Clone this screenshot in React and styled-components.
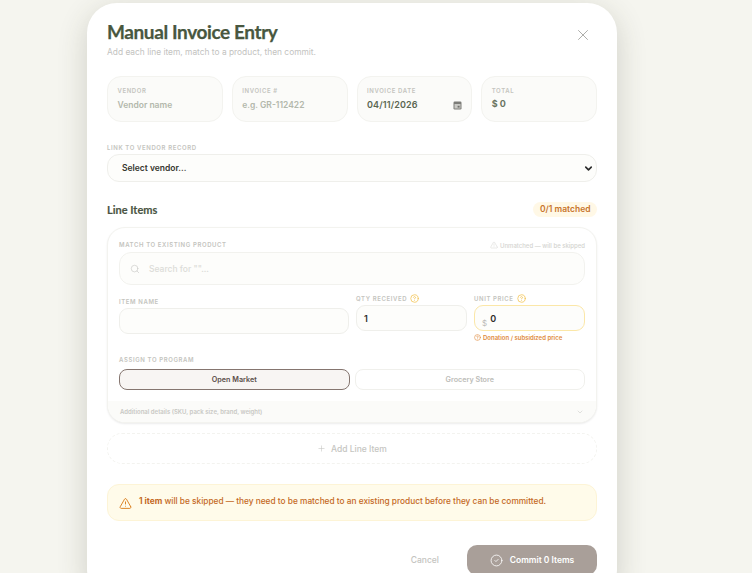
import React from "react";
import styled, { createGlobalStyle } from "styled-components";
import { X, Search, TriangleAlert, CircleHelp, Plus, ChevronDown, CircleCheck } from "lucide-react";

const GlobalStyle = createGlobalStyle`
  html, body {
    margin: 0;
    height: 100%;
    overflow: hidden;
    background: #f5f5ef;
    font-family: "Inter", "Liberation Sans", sans-serif;
  }
`;

const CalendarGlyph = () => (
  <svg width="9" height="9" viewBox="0 0 9 9">
    <rect x="0.5" y="0.5" width="8" height="8" rx="1.2" fill="#7c7c78" />
    <rect x="1.5" y="3" width="6" height="4.5" fill="#c9c9c5" />
    <rect x="4.6" y="4.8" width="2" height="1.8" fill="#6f6f6b" />
  </svg>
);

const App = () => {
  return (
    <>
      <GlobalStyle />
      <Page>
        <Modal>
          <Header>
            <div>
              <Title>Manual Invoice Entry</Title>
              <Subtitle>Add each line item, match to a product, then commit.</Subtitle>
            </div>
            <CloseButton>
              <X size={18} strokeWidth={1.1} />
            </CloseButton>
          </Header>

          <TopFields>
            <TopField>
              <TinyLabel>Vendor</TinyLabel>
              <FieldValue $muted>Vendor name</FieldValue>
            </TopField>
            <TopField>
              <TinyLabel>Invoice #</TinyLabel>
              <FieldValue $muted>e.g. GR-112422</FieldValue>
            </TopField>
            <TopField>
              <TinyLabel>Invoice Date</TinyLabel>
              <DateRow>
                <FieldValue>04/11/2026</FieldValue>
                <CalendarGlyph />
              </DateRow>
            </TopField>
            <TopField>
              <TinyLabel>Total</TinyLabel>
              <TotalValue>$ 0</TotalValue>
            </TopField>
          </TopFields>

          <VendorLabel>Link to vendor record</VendorLabel>
          <VendorSelect>
            <span>Select vendor...</span>
            <ChevronDown size={11} strokeWidth={3.5} color="#2b2b2b" />
          </VendorSelect>

          <SectionHeader>
            <SectionTitle>Line Items</SectionTitle>
            <MatchBadge>0/1 matched</MatchBadge>
          </SectionHeader>

          <LineCard>
            <CardBody>
              <MatchRow>
                <TinyLabel>Match to existing product</TinyLabel>
                <Unmatched>
                  <TriangleAlert size={8} strokeWidth={1.5} />
                  Unmatched — will be skipped
                </Unmatched>
              </MatchRow>
              <SearchBox>
                <Search size={10} strokeWidth={1.5} color="#c9c9c5" />
                <span>Search for ""...</span>
              </SearchBox>

              <ItemGrid>
                <ItemNameCol>
                  <TinyLabel>Item Name</TinyLabel>
                  <ItemInput />
                </ItemNameCol>
                <div>
                  <HelpLabel>
                    <TinyLabel>Qty Received</TinyLabel>
                    <CircleHelp size={9} color="#f2c14e" strokeWidth={2} />
                  </HelpLabel>
                  <ItemInput>1</ItemInput>
                </div>
                <div>
                  <HelpLabel>
                    <TinyLabel>Unit Price</TinyLabel>
                    <CircleHelp size={9} color="#f2c14e" strokeWidth={2} />
                  </HelpLabel>
                  <ItemInput $warn>
                    <Dollar>$</Dollar>0
                  </ItemInput>
                  <PriceNote>
                    <CircleHelp size={7} strokeWidth={2} />
                    Donation / subsidized price
                  </PriceNote>
                </div>
              </ItemGrid>

              <ProgramLabel>Assign to program</ProgramLabel>
              <ProgramRow>
                <ProgramButton $active>Open Market</ProgramButton>
                <ProgramButton>Grocery Store</ProgramButton>
              </ProgramRow>
            </CardBody>
            <DetailsStrip>
              <span>Additional details (SKU, pack size, brand, weight)</span>
              <ChevronDown size={8} strokeWidth={1.5} color="#c4c4c0" />
            </DetailsStrip>
          </LineCard>

          <AddLine>
            <Plus size={9} strokeWidth={1.5} />
            Add Line Item
          </AddLine>

          <WarningBox>
            <WarningIcon>
              <TriangleAlert size={13} strokeWidth={1.7} color="#d97a16" />
            </WarningIcon>
            <span>
              <strong>1 item</strong> will be skipped — they need to be matched to an existing product before they can be committed.
            </span>
          </WarningBox>

          <Footer>
            <CancelButton>Cancel</CancelButton>
            <CommitButton>
              <CircleCheck size={13} strokeWidth={1.5} />
              Commit 0 Items
            </CommitButton>
          </Footer>
        </Modal>
      </Page>
    </>
  );
};

export default App;

const Page = styled.div`
  height: 573px;
  overflow: hidden;
  padding-top: 3px;
  box-sizing: border-box;
`;

const Modal = styled.div`
  width: 530px;
  margin-left: 87px;
  padding: 17px 20px 24px;
  box-sizing: border-box;
  background: #fff;
  border-radius: 30px;
  box-shadow: 0 8px 30px rgba(60, 60, 40, 0.2);
`;

const Header = styled.div`
  display: flex;
  justify-content: space-between;
  align-items: flex-start;
`;

const Title = styled.h1`
  margin: 0;
  font-family: "Lato", "Liberation Sans", sans-serif;
  font-size: 19px;
  line-height: 24px;
  font-weight: 700;
  letter-spacing: -0.4px;
  -webkit-text-stroke: 0.25px #48573f;
  color: #48573f;
`;

const Subtitle = styled.p`
  margin: 2px 0 0;
  font-size: 8.4px;
  line-height: 13px;
  color: #c3c3bf;
`;

const CloseButton = styled.div`
  margin: 6px 5px 0 0;
  color: #9c9c98;
  display: flex;
`;

const TopFields = styled.div`
  display: grid;
  grid-template-columns: repeat(4, 1fr);
  gap: 9px;
  margin-top: 17px;
`;

const TopField = styled.div`
  height: 46px;
  box-sizing: border-box;
  padding: 10px 9.5px 0;
  background: #fbfbf9;
  border: 1px solid #f3f3ef;
  border-radius: 14px;
`;

const TinyLabel = styled.div`
  font-size: 6px;
  line-height: 8px;
  font-weight: 600;
  letter-spacing: 0.6px;
  text-transform: uppercase;
  color: #c4c4be;
  white-space: nowrap;
`;

const FieldValue = styled.div`
  margin-top: 4px;
  font-size: ${({ $muted }) => ($muted ? "8.5px" : "9px")};
  line-height: 12px;
  font-weight: 600;
  letter-spacing: ${({ $muted }) => ($muted ? "0" : "0.15px")};
  color: ${({ $muted }) => ($muted ? "#b3b8ac" : "#5a6651")};
`;

const DateRow = styled.div`
  display: flex;
  justify-content: space-between;
  align-items: flex-end;

  svg {
    margin-bottom: 1px;
  }
`;

const TotalValue = styled.div`
  margin-top: 3px;
  font-size: 9px;
  line-height: 12px;
  font-weight: 700;
  color: #6a7461;
`;

const VendorLabel = styled(TinyLabel)`
  margin-top: 22px;
`;

const VendorSelect = styled.div`
  display: flex;
  justify-content: space-between;
  align-items: center;
  height: 28px;
  margin-top: 2px;
  padding: 0 2px 0 14px;
  box-sizing: border-box;
  background: #fdfdfb;
  border: 1px solid #efefeb;
  border-radius: 12px;
  font-size: 8.5px;
  font-weight: 600;
  color: #36362f;
`;

const SectionHeader = styled.div`
  display: flex;
  justify-content: space-between;
  align-items: center;
  margin-top: 20px;
`;

const SectionTitle = styled.h2`
  margin: 0;
  font-family: "Lato", "Liberation Sans", sans-serif;
  font-size: 11px;
  font-weight: 700;
  -webkit-text-stroke: 0.15px #4a5443;
  color: #4a5443;
`;

const MatchBadge = styled.div`
  padding: 0 6.5px;
  height: 15px;
  line-height: 15px;
  background: #fff8e6;
  border-radius: 8px;
  font-size: 8.5px;
  font-weight: 600;
  color: #c8742a;
`;

const LineCard = styled.div`
  margin-top: 10px;
  background: #fff;
  border: 1px solid #f3f3ef;
  border-radius: 18px;
  box-shadow: 0 1px 2px rgba(0, 0, 0, 0.08);
  overflow: hidden;
`;

const CardBody = styled.div`
  padding: 13px 11px 11px;
`;

const MatchRow = styled.div`
  display: flex;
  justify-content: space-between;
  align-items: center;
`;

const Unmatched = styled.div`
  display: flex;
  align-items: center;
  gap: 2px;
  font-size: 6px;
  font-weight: 500;
  color: #d4d4d0;
`;

const SearchBox = styled.div`
  display: flex;
  align-items: center;
  gap: 9px;
  height: 33px;
  margin-top: 3px;
  padding: 0 10px;
  box-sizing: border-box;
  background: #fdfdfb;
  border: 1px solid #f2f2ee;
  border-radius: 12px;
  font-size: 8.5px;
  font-weight: 500;
  color: #dcdcd8;
`;

const ItemGrid = styled.div`
  display: grid;
  grid-template-columns: 230px 111px 111px;
  gap: 7px;
  margin-top: 9px;
`;

const ItemNameCol = styled.div`
  padding-top: 4px;
`;

const HelpLabel = styled.div`
  display: flex;
  align-items: center;
  gap: 3px;
  height: 9px;
`;

const ItemInput = styled.div`
  display: flex;
  align-items: center;
  position: relative;
  height: 26px;
  margin-top: 2px;
  padding: 0 7px;
  box-sizing: border-box;
  background: #fdfdfb;
  border: 1px solid ${({ $warn }) => ($warn ? "#fbe7a8" : "#efefeb")};
  border-radius: 9px;
  font-size: 9px;
  font-weight: 600;
  color: #2e2e2a;
`;

const Dollar = styled.span`
  margin-right: 3px;
  padding-top: 10px;
  font-size: 8px;
  font-weight: 400;
  color: #b9b9b5;
`;

const PriceNote = styled.div`
  display: flex;
  align-items: center;
  gap: 2px;
  margin-top: 2px;
  font-size: 6px;
  line-height: 9px;
  font-weight: 600;
  color: #e08a3c;
`;

const ProgramLabel = styled(TinyLabel)`
  margin-top: 14px;
`;

const ProgramRow = styled.div`
  display: grid;
  grid-template-columns: 1fr 1fr;
  gap: 5px;
  margin-top: 5px;
`;

const ProgramButton = styled.div`
  height: 21px;
  box-sizing: border-box;
  display: flex;
  align-items: center;
  justify-content: center;
  background: ${({ $active }) => ($active ? "#f8f5f3" : "#fff")};
  border: 1px solid ${({ $active }) => ($active ? "#85756f" : "#f0f0ec")};
  border-radius: 8px;
  font-size: 7.2px;
  font-weight: 600;
  color: ${({ $active }) => ($active ? "#5b4e49" : "#bdbdb9")};
`;

const DetailsStrip = styled.div`
  display: flex;
  justify-content: space-between;
  align-items: center;
  height: 21px;
  padding: 0 12px;
  background: #fbfbf9;
  font-size: 6px;
  font-weight: 600;
  color: #c8c8c4;
`;

const AddLine = styled.div`
  display: flex;
  align-items: center;
  justify-content: center;
  gap: 5px;
  height: 31px;
  margin-top: 10px;
  box-sizing: border-box;
  border: 1px dashed #f3f3ef;
  border-radius: 15px;
  font-size: 8.5px;
  font-weight: 500;
  color: #c5c5c1;
`;

const WarningBox = styled.div`
  display: flex;
  align-items: center;
  gap: 7px;
  height: 37px;
  margin-top: 20px;
  padding: 0 11px;
  box-sizing: border-box;
  background: #fffbea;
  border: 1px solid #fdf4d6;
  border-radius: 12px;
  font-size: 8.3px;
  font-weight: 500;
  color: #c4691f;

  strong {
    font-weight: 700;
  }

  span {
    margin-top: -3px;
  }
`;

const WarningIcon = styled.div`
  display: flex;
  margin-top: 2px;
`;

const Footer = styled.div`
  display: flex;
  justify-content: flex-end;
  align-items: center;
  gap: 28px;
  margin-top: 24px;
`;

const CancelButton = styled.div`
  font-size: 8.5px;
  font-weight: 500;
  color: #c4c4c0;
`;

const CommitButton = styled.div`
  display: flex;
  align-items: center;
  justify-content: center;
  gap: 7px;
  width: 130px;
  height: 30px;
  background: #a99f99;
  border-radius: 10px;
  font-size: 8.5px;
  font-weight: 600;
  color: #fff;
`;
